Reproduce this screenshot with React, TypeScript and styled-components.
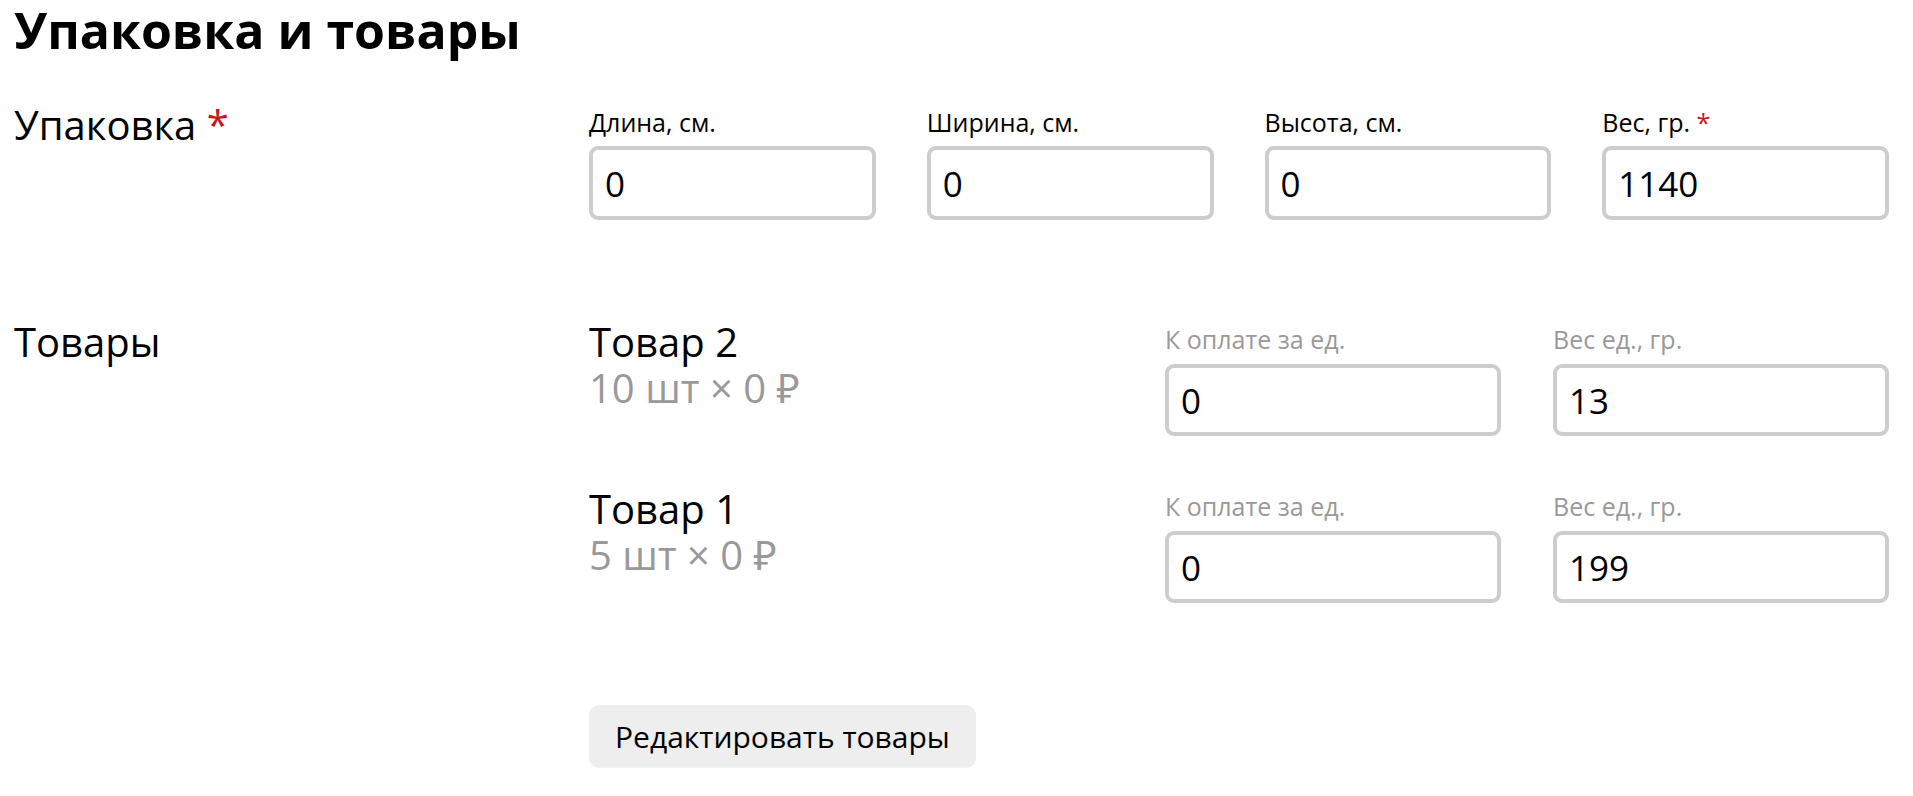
import styled, { createGlobalStyle } from "styled-components";

const GlobalStyle = createGlobalStyle`
  html, body {
    margin: 0;
    padding: 0;
    background: #fff;
    color: #000;
    font-family: "Open Sans", "Noto Sans", sans-serif;
  }
`;

const Page = styled.div`
  padding: 0 24px 40px 14px;
`;

const Heading = styled.h1`
  margin: 0 0 42px;
  font-size: 50px;
  font-weight: 700;
  line-height: 60px;
`;

const Section = styled.section<{ $gap?: number }>`
  display: grid;
  grid-template-columns: 575px 1fr;
  margin-bottom: ${(p) => p.$gap ?? 0}px;
`;

const SectionTitle = styled.div`
  font-size: 40px;
  line-height: 46px;
`;

const Required = styled.span`
  color: #c4161c;
`;

const SizeGrid = styled.div`
  display: grid;
  grid-template-columns: repeat(4, 1fr);
  column-gap: 51px;
`;

const Field = styled.label`
  display: flex;
  flex-direction: column;
`;

const FieldLabel = styled.span<{ $muted?: boolean }>`
  font-size: 25px;
  line-height: 30px;
  padding-top: 5px;
  color: ${(p) => (p.$muted ? "#999" : "#000")};
  margin-bottom: ${(p) => (p.$muted ? 10 : 9)}px;
`;

const Input = styled.input<{ $height?: number }>`
  box-sizing: border-box;
  width: 100%;
  height: ${(p) => p.$height ?? 74}px;
  border: 4px solid #cdcdcd;
  border-radius: 9px;
  padding: 0 12px;
  font-family: "Open Sans", "Noto Sans", sans-serif;
  font-size: 35px;
  color: #000;
  background: #fff;
  outline: none;
`;

const Products = styled.div`
  display: flex;
  flex-direction: column;
  gap: 50px;
`;

const ProductRow = styled.div`
  display: grid;
  grid-template-columns: 1fr 336px 336px;
  column-gap: 52px;
`;

const ProductInfo = styled.div`
  display: flex;
  flex-direction: column;
`;

const ProductName = styled.div`
  font-size: 40px;
  line-height: 46px;
`;

const ProductQty = styled.div`
  font-size: 40px;
  line-height: 46px;
  color: #999;
`;

const Actions = styled.div`
  grid-column: 2;
`;

const EditButton = styled.button`
  height: 62px;
  padding: 0 26px;
  border: none;
  border-radius: 10px;
  background: #eee;
  box-shadow: 0 1px 0 #e6f4fb;
  font-family: "Open Sans", "Noto Sans", sans-serif;
  font-size: 30px;
  color: #000;
  cursor: pointer;
`;

const sizes = [
  { label: "Длина, см.", value: "0" },
  { label: "Ширина, см.", value: "0" },
  { label: "Высота, см.", value: "0" },
  { label: "Вес, гр.", value: "1140", required: true },
];

const products = [
  { name: "Товар 2", qty: 10, price: 0, weight: "13" },
  { name: "Товар 1", qty: 5, price: 0, weight: "199" },
];

export default function App() {
  return (
    <Page>
      <GlobalStyle />
      <Heading>Упаковка и товары</Heading>

      <Section $gap={99}>
        <SectionTitle>
          Упаковка <Required>*</Required>
        </SectionTitle>
        <SizeGrid>
          {sizes.map((s) => (
            <Field key={s.label}>
              <FieldLabel>
                {s.label}
                {s.required && <Required> *</Required>}
              </FieldLabel>
              <Input defaultValue={s.value} />
            </Field>
          ))}
        </SizeGrid>
      </Section>

      <Section $gap={102}>
        <SectionTitle>Товары</SectionTitle>
        <Products>
          {products.map((p) => (
            <ProductRow key={p.name}>
              <ProductInfo>
                <ProductName>{p.name}</ProductName>
                <ProductQty>
                  {p.qty} шт × {p.price} ₽
                </ProductQty>
              </ProductInfo>
              <Field>
                <FieldLabel $muted>К оплате за ед.</FieldLabel>
                <Input $height={72} defaultValue={String(p.price)} />
              </Field>
              <Field>
                <FieldLabel $muted>Вес ед., гр.</FieldLabel>
                <Input $height={72} defaultValue={p.weight} />
              </Field>
            </ProductRow>
          ))}
        </Products>
      </Section>

      <Section>
        <Actions>
          <EditButton type="button">Редактировать товары</EditButton>
        </Actions>
      </Section>
    </Page>
  );
}
